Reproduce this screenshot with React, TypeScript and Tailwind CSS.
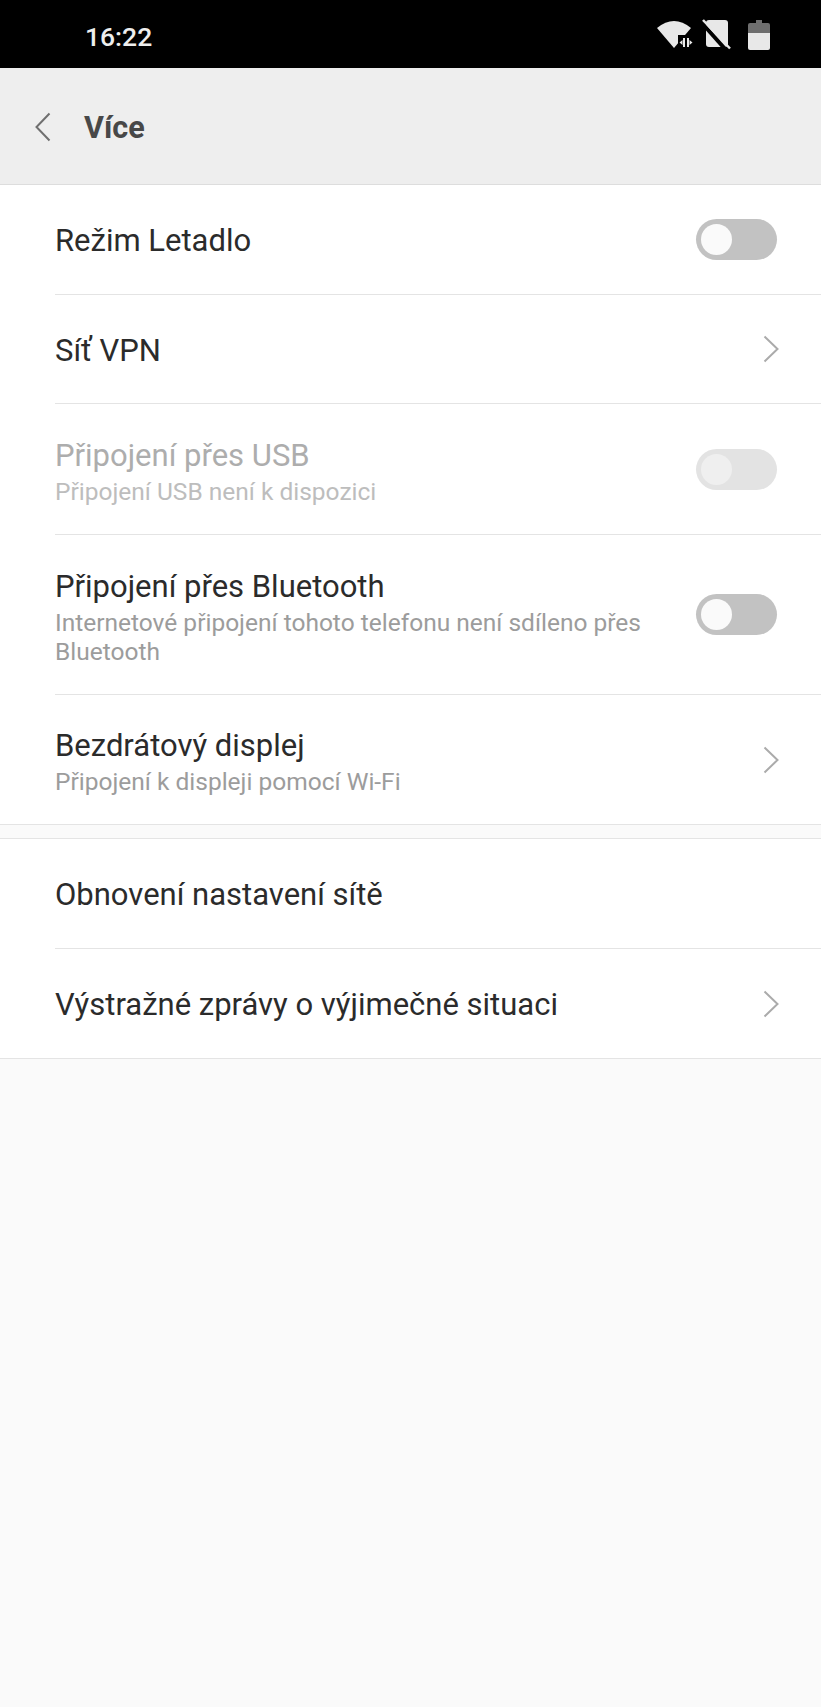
const Chevron = () => (
  <svg width="16" height="28" viewBox="0 0 16 28" fill="none" className="-mr-[1px] shrink-0">
    <path d="M1.5 1.5 L14.5 14 L1.5 26.5" stroke="#ababab" strokeWidth="2" />
  </svg>
);

const Toggle = ({ disabled }: { disabled?: boolean }) => (
  <div className={`mr-[1px] flex h-[41px] w-[81px] shrink-0 items-center rounded-full pl-[5px] ${disabled ? "bg-[#e3e3e3]" : "bg-[#c2c2c2]"}`}>
    <div className={`h-[31px] w-[31px] rounded-full ${disabled ? "bg-[#efefef]" : "bg-[#fafafa]"}`} />
  </div>
);

type RowProps = {
  title: string;
  sub?: string;
  right?: React.ReactNode;
  h: string;
  disabled?: boolean;
  last?: boolean;
};

const Row = ({ title, sub, right, h, disabled, last }: RowProps) => (
  <div className={`pl-[55px] ${h}`}>
    <div className={`flex h-full items-center pr-[43px] ${last ? "" : "border-b border-[#e4e4e4]"}`}>
      <div className={`min-w-0 flex-1 ${sub ? "pt-[5px]" : "pt-[3px]"}`}>
        <div className={`text-[31px] leading-[36px] ${disabled ? "text-[#adadad]" : "text-[#2b2b2b]"}`}>{title}</div>
        {sub && (
          <div className={`mt-[3px] w-[610px] text-[24.5px] leading-[29px] ${disabled ? "text-[#bdbdbd]" : "text-[#9c9c9c]"}`}>{sub}</div>
        )}
      </div>
      {right}
    </div>
  </div>
);

export default function App() {
  return (
    <div className="flex min-h-[1707px] w-[821px] flex-col bg-[#fafafa] font-['Roboto',sans-serif]">
      <div className="flex h-[68px] items-center justify-between bg-black pl-[85px] pr-[51px]">
        <span className="pt-[7px] text-[26.5px] font-medium leading-none text-[#eeeeee]">16:22</span>
        <div className="flex items-center pt-[2px]">
          <svg width="36" height="30" viewBox="0 0 36 30">
            <path d="M0 8 Q17 -6 34 8 L17 28 Z" fill="#e8e8e8" />
            <rect x="21" y="15" width="15" height="15" fill="#000" />
            <path d="M26 18 V27 H28 V18 Z M30 18 V27 H32 V18 Z" fill="#e8e8e8" />
            <path d="M25.5 20 V25 L22.5 22.5 Z M32.5 20 V25 L35.5 22.5 Z" fill="#e8e8e8" />
          </svg>
          <svg width="30" height="32" viewBox="0 0 30 32" className="ml-[9px]">
            <rect x="4" y="1" width="22" height="27" rx="3" fill="#e8e8e8" />
            <path d="M-1 3 L24 31" stroke="#000" strokeWidth="4" />
            <path d="M1 1 L28 29.5" stroke="#e8e8e8" strokeWidth="2.5" />
          </svg>
          <div className="ml-[16px] flex h-[30px] w-[22px] flex-col items-center">
            <div className="h-[3px] w-[6px] bg-[#6e6e6e]" />
            <div className="h-[10px] w-[22px] rounded-t-[2px] bg-[#6e6e6e]" />
            <div className="h-[17px] w-[22px] rounded-b-[2px] bg-[#e8e8e8]" />
          </div>
        </div>
      </div>
      <div className="flex h-[117px] items-center border-b border-[#dddddd] bg-[#eeeeee] pl-[35px]">
        <svg width="16" height="30" viewBox="0 0 16 30" fill="none" className="mt-[2px]">
          <path d="M14.5 1.5 L1.5 15 L14.5 28.5" stroke="#6f6f6f" strokeWidth="2" />
        </svg>
        <span className="ml-[33px] pt-[4px] text-[30.5px] font-bold leading-none text-[#484848]">Více</span>
      </div>
      <div className="border-b border-[#e4e4e4] bg-white">
        <Row h="h-[110px]" title="Režim Letadlo" right={<Toggle />} />
        <Row h="h-[109px]" title="Síť VPN" right={<Chevron />} />
        <Row h="h-[131px]" disabled title="Připojení přes USB" sub="Připojení USB není k dispozici" right={<Toggle disabled />} />
        <Row h="h-[160px]" title="Připojení přes Bluetooth" sub="Internetové připojení tohoto telefonu není sdíleno přes Bluetooth" right={<Toggle />} />
        <Row h="h-[129px]" last title="Bezdrátový displej" sub="Připojení k displeji pomocí Wi-Fi" right={<Chevron />} />
      </div>
      <div className="h-[13px]" />
      <div className="border-y border-[#e4e4e4] bg-white">
        <Row h="h-[110px]" title="Obnovení nastavení sítě" />
        <Row h="h-[109px]" last title="Výstražné zprávy o výjimečné situaci" right={<Chevron />} />
      </div>
    </div>
  );
}
